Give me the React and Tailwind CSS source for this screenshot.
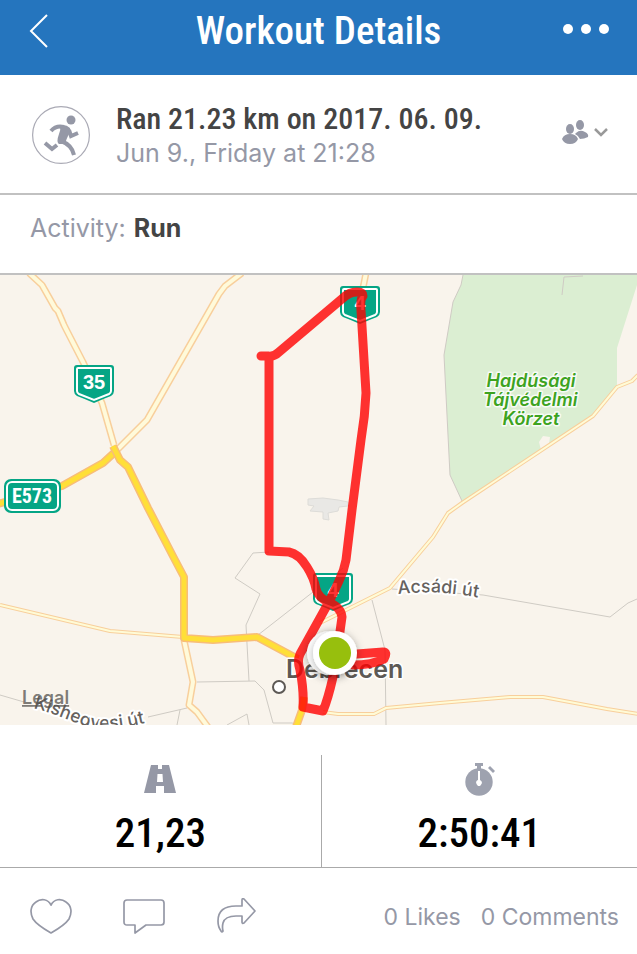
const sans = 'font-["Inter","Liberation_Sans",sans-serif]';
const narrow = 'font-["Roboto_Condensed","Liberation_Sans_Narrow","Arial_Narrow",sans-serif]';

const thinRoads = [
  "M0 330 L110 356 L183 362",
  "M320 348 L390 313 L433 262 L448 238 L462 228 L593 141 L617 112 L632 106 L638 100",
  "M323 437 L338 439 L374 439 L386 433 L440 428 L510 422 L543 422 L607 434 L638 439",
];
const paleRoads = [
  "M29 -2 L42 10 L55 33 L58 36 L64 50 L66 54 L83 87 L102 128 L114 170",
  "M242 -2 L225 11 L219 19 L147 145 L117 175",
  "M366 -2 L362 18",
  "M184 365 L193 407 L189 430 L197 437 L208 452",
];
const yellowRoads = [
  "M-2 229 L62 211 L103 188 L115 177",
  "M113 171 L120 185 L128 192 L148 233 L175 285 L184 302 L184 363 L213 365 L257 362 L298 384",
  "M304 422 L302 435 L296 452",
];
const boundaries = [
  "M269 277 L253 278 L235 303 L260 319 L246 350 L249 406",
  "M258 360 L313 317 L343 293",
  "M372 325 L385 375 L386 450",
  "M197 407 L255 406 L264 415 L273 448 L292 448 L300 450",
  "M227 450 L247 439 L249 450",
  "M0 420 L24 427",
  "M148 442 L187 433 M180 435 L177 450",
  "M392 314 L483 320 L610 342 L628 328 L637 324",
  "M463 0 L461 10 L453 27 L444 80 L450 200 L462 226",
  "M562 20 L564 2 L583 1",
];

function Road({ d, width, fill, edge }) {
  return (
    <g fill="none" strokeLinejoin="round">
      <path d={d} stroke={edge} strokeWidth={width} />
      <path d={d} stroke={fill} strokeWidth={width > 5 ? width - 3 : width - 2} />
    </g>
  );
}

function Shield({ x, y, label }) {
  return (
    <g transform={`translate(${x} ${y})`}>
      <path d="M3 0 H37 Q40 0 40 3 V26 Q40 29 37 31 Q29 34 20 38 Q11 34 3 31 Q0 29 0 26 V3 Q0 0 3 0Z" fill="#05a585" />
      <path d="M4 3 H36 Q37 3 37 4 V26 Q37 28 35 29 L20 35 L5 29 Q3 28 3 26 V4 Q3 3 4 3Z" fill="none" stroke="#fff" strokeWidth="2" />
      <text x="20" y="24" textAnchor="middle" fontSize="20" fontWeight="700" fill="#fff" fontFamily="Liberation Sans, sans-serif">{label}</text>
    </g>
  );
}

function RouteMap() {
  return (
    <svg viewBox="0 0 637 450" preserveAspectRatio="xMidYMid slice" className='block h-[450px] w-full bg-[#f9f4ec] font-["Inter",sans-serif]' role="img" aria-label="Route map">
      <defs>
        <filter id="pinShadow" x="-50%" y="-50%" width="200%" height="200%">
          <feDropShadow dx="0" dy="2" stdDeviation="4" floodColor="#000" floodOpacity="0.3" />
        </filter>
        <path id="kishegyesi" d="M33 433 C65 441 80 453 103 454 C125 454 140 448 164 445" />
        <path id="acsadi" d="M398 319 C430 316 450 317 486 324" />
      </defs>
      <rect width="637" height="450" fill="#f9f4ec" />
      <path d="M463 0 L461 10 L453 27 L444 80 L450 200 L462 226 L541 175 L539 167 L543 161 L550 162 L549 169 L593 141 L617 112 L617 73 L637 10 V0Z" fill="#dbeed2" />
      <path d="M308 224 L323 223 L338 225 L348 227 V231 L339 232 L338 236 L328 238 L329 245 L323 244 V237 L310 236 L314 231 L308 230Z" fill="#e9e8e5" stroke="#dddcd8" />
      {boundaries.map((d) => <path key={d} d={d} fill="none" stroke="#cfcbc4" />)}
      {thinRoads.map((d) => <Road key={d} d={d} width={4} fill="#fffbd6" edge="#f8cf9c" />)}
      {paleRoads.map((d) => <Road key={d} d={d} width={7} fill="#fffada" edge="#f8cf9c" />)}
      {yellowRoads.map((d) => <Road key={d} d={d} width={8} fill="#ffdf38" edge="#f8bd78" />)}

      <Shield x={340} y={11} label="4" />
      <Shield x={74} y={90} label="35" />
      <Shield x={313} y={298} label="4" />
      <rect x="4" y="204" width="57" height="34" rx="7" fill="#05a585" />
      <rect x="7" y="207" width="51" height="28" rx="5" fill="none" stroke="#fff" strokeWidth="2" />
      <text x="32" y="228" textAnchor="middle" fontSize="20" fontWeight="700" fill="#fff" className='font-["Roboto_Condensed","Liberation_Sans",sans-serif]'>E573</text>

      <g fill="#3da31f" stroke="#fff" strokeWidth="3" strokeOpacity="0.8" strokeLinejoin="round" paintOrder="stroke" fontSize="18" fontWeight="600" fontStyle="italic" textAnchor="middle">
        <text x="531" y="112">Hajdúsági</text>
        <text x="530" y="131">Tájvédelmi</text>
        <text x="531" y="150">Körzet</text>
      </g>
      <g fill="#66625e" stroke="#fff" strokeWidth="4" strokeLinejoin="round" paintOrder="stroke" fontSize="18" fontWeight="500">
        <text><textPath href="#acsadi">Acsádi út</textPath></text>
        <text><textPath href="#kishegyesi">Kishegyesi út</textPath></text>
      </g>
      <text x="22" y="429" fontSize="18" fontWeight="600" fill="#55534f" fillOpacity="0.75" textDecoration="underline">Legal</text>
      <text x="286" y="403" fontSize="25" fontWeight="600" fill="#5d5955" stroke="#fff" strokeWidth="3" strokeLinejoin="round" paintOrder="stroke">Debrecen</text>
      <circle cx="279" cy="412" r="6" fill="#fff" stroke="#5d5955" strokeWidth="2" />

      <path
        d="M261 81 L268 81 Q274 82 279 77 L343 23 Q349 17 357 17 Q363 17 363 21 Q360 24 361 35 L363 68 L366 118 Q365 142 361 165 L352 235 L346 285 Q344 296 339 306 L330 325 L300 379 Q297 386 300 395 Q304 415 303 432 L323 436 Q328 424 333 402 L334 378 M269 83 V276 L289 277 Q299 279 307 292 Q314 303 316 314 Q318 322 328 327 Q341 332 342 342 L337 378 L357 379 L383 377 Q388 377 384 384 Q372 390 353 390"
        fill="none" stroke="#ff0000" strokeOpacity="0.8" strokeWidth="9" strokeLinecap="round" strokeLinejoin="round"
      />
      <circle cx="329" cy="378" r="22" fill="#fff" filter="url(#pinShadow)" />
      <circle cx="335" cy="378" r="22" fill="#fff" filter="url(#pinShadow)" />
      <circle cx="335" cy="378" r="16" fill="#97bf0d" />
    </svg>
  );
}

function Runner() {
  return (
    <svg viewBox="0 0 58 58" className="size-[58px] shrink-0" aria-hidden="true">
      <circle cx="29" cy="29" r="28.4" fill="#fff" stroke="#aaaab5" strokeWidth="1.2" />
      <g fill="none" stroke="#9598a6" strokeLinejoin="round">
        <path d="M19 25 Q24 19 32 21" strokeWidth="4" />
        <path d="M37 24 L39 30 L46 27" strokeWidth="4" strokeLinejoin="miter" />
        <path d="M13 37 L20 43 L25 39" strokeWidth="4" strokeLinejoin="miter" />
        <path d="M29 35 Q40 39 42 49" strokeWidth="4" />
      </g>
      <path d="M26 20 Q33 17 38 22 Q39 25 36 30 Q33 36 34 38 L27 38 Q24 36 27 28 Q29 24 28 21Z" fill="#9598a6" />
      <circle cx="39" cy="14" r="4.5" fill="#9598a6" />
    </svg>
  );
}

export default function App() {
  return (
    <main className={`w-full bg-white ${sans}`}>
      <header className="grid h-[75px] grid-cols-[1fr_auto_1fr] items-start bg-[#2575be] px-7 text-white">
        <button type="button" aria-label="Back" className="mt-3 justify-self-start">
          <svg viewBox="0 0 22 38" className="h-[38px] w-[22px]" fill="none" stroke="currentColor" strokeWidth="2"><path d="M19 3 L3 19 L19 35" /></svg>
        </button>
        <h1 className={`mt-1 text-[39px] leading-[54px] font-medium ${narrow}`}>Workout Details</h1>
        <button type="button" aria-label="More options" className="mt-6 flex gap-2 justify-self-end">
          <span className="size-[10px] rounded-full bg-white" />
          <span className="size-[10px] rounded-full bg-white" />
          <span className="size-[10px] rounded-full bg-white" />
        </button>
      </header>

      <section className="flex h-[120px] items-center border-b-2 border-[#c1c1c1] pt-0.5 pr-7 pl-8">
        <Runner />
        <div className="ml-[26px] grow">
          <h2 className={`text-[30px] leading-[36px] font-medium whitespace-nowrap text-[#444] ${narrow}`}>Ran 21.23 km on 2017. 06. 09.</h2>
          <p className="text-[25px] leading-[32px] whitespace-nowrap text-[#9598a6]">Jun 9., Friday at 21:28</p>
        </div>
        <button type="button" aria-label="Shared with friends" className="mb-1.5 flex items-center">
          <svg viewBox="0 0 48 26" className="h-[26px] w-[48px]">
            <g fill="#9598a6">
              <ellipse cx="19" cy="6" rx="4" ry="5" />
              <path d="M15 14 Q19 10 24 13 Q28 15 27 18 Q23 20 19 20 Q18 17 14 15Z" />
              <ellipse cx="9" cy="10" rx="4" ry="5" />
              <path d="M1 20 Q3 15 9 15 Q15 15 17 20 Q15 25 9 25 Q3 25 1 20Z" />
            </g>
            <path d="M34 10 L40 16 L46 10" fill="none" stroke="#999" strokeWidth="2.5" />
          </svg>
        </button>
      </section>

      <dl className="flex h-20 gap-2 border-b-2 border-[#c1c1c1] px-[30px] pt-4 text-[25px] leading-[34px]">
        <dt className="text-[#9598a6]">Activity:</dt>
        <dd className="font-bold text-[#444]">Run</dd>
      </dl>

      <RouteMap />

      <section className="grid h-[143px] grid-cols-[51fr_50fr] border-b border-[#aaa] pt-[30px]">
        <div className="flex flex-col items-center border-r border-[#aaa] pt-2">
          <svg viewBox="0 0 32 32" className="size-8" aria-label="Distance">
            <path fillRule="evenodd" fill="#9598a6" d="M7 2 H14 V6 H18 V2 H25 L32 30 H20 V23 H12 V30 H0Z M13.5 11 L13 19 H19 L18.5 11Z" />
          </svg>
          <p className={`mt-3 text-[41px] leading-[52px] font-medium ${narrow}`}>21,23</p>
        </div>
        <div className="flex flex-col items-center pt-2">
          <svg viewBox="0 0 32 34" className="h-[34px] w-8" aria-label="Duration">
            <g fill="#9ea2af">
              <path d="M12 0 H20 V3 H18 V6 H14 V3 H12Z" /><path d="M27 3 L32 8 L30 10 L25 5Z" />
              <circle cx="16" cy="19" r="13.7" />
            </g>
            <path d="M15 8 H17 V17 Q19 18 19 20 Q18 22 17 23 H15 Q13 21 13 19 Q14 17 15 17Z" fill="#fff" />
          </svg>
          <p className={`mt-2.5 text-[41px] leading-[52px] font-medium ${narrow}`}>2:50:41</p>
        </div>
      </section>

      <footer className="flex h-[86px] items-center justify-between pt-3 pr-[18px] pl-[30px] text-[#9598a6]">
        <div className="flex items-center gap-[51px]">
          <button type="button" aria-label="Like">
            <svg viewBox="0 0 42 38" className="h-[38px] w-[42px]" fill="none" stroke="currentColor" strokeWidth="1.7" strokeLinejoin="round"><path d="M21 7 C18 1 11 0 6 4 C0 8 0 15 3 21 C7 27 14 31 21 35 C28 31 35 27 39 21 C42 15 42 8 36 4 C31 0 24 1 21 7Z" /></svg>
          </button>
          <button type="button" aria-label="Comment">
            <svg viewBox="0 0 42 38" className="h-[38px] w-[42px]" fill="none" stroke="currentColor" strokeWidth="1.7" strokeLinejoin="round"><path d="M4 2 H38 Q41 2 41 5 V24 Q41 27 38 27 H23 L12 35 V27 H4 Q1 27 1 24 V5 Q1 2 4 2Z" /></svg>
          </button>
          <button type="button" aria-label="Share">
            <svg viewBox="0 0 42 38" className="h-[38px] w-[42px]" fill="none" stroke="currentColor" strokeWidth="1.7" strokeLinejoin="round"><path d="M26 8 V2 Q26 0 28 1 L39 13 L28 25 Q26 26 26 24 V18 H20 Q9 18 7 25 Q6 29 7 33 Q6 35 5 33 Q2 29 2 23 Q2 8 20 8Z" /></svg>
          </button>
        </div>
        <div className="flex gap-5 text-[23px] leading-8 whitespace-nowrap">
          <a href="#likes">0 Likes</a>
          <a href="#comments">0 Comments</a>
        </div>
      </footer>
    </main>
  );
}
